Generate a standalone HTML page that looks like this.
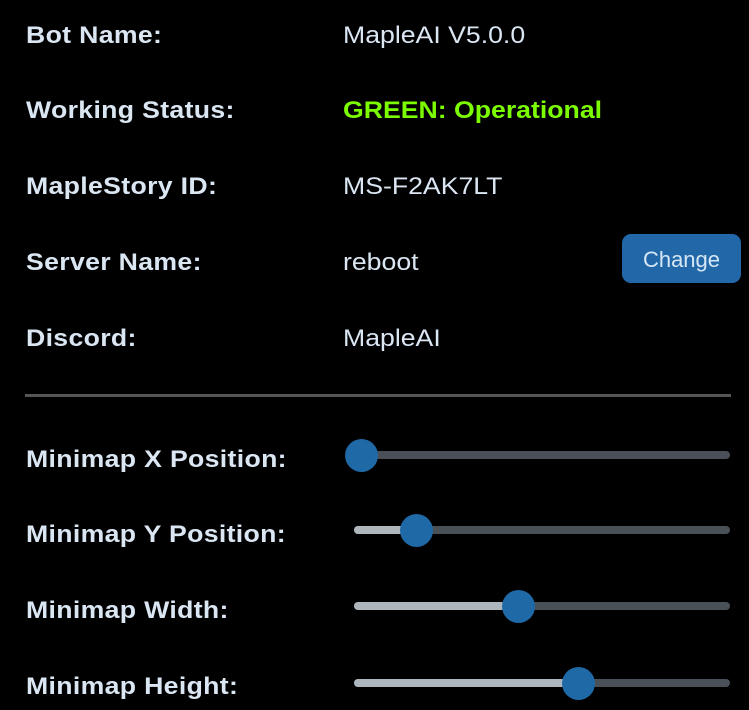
<!DOCTYPE html>
<html><head><style>
body{margin:0;background:#000;width:749px;height:710px;overflow:hidden;font-family:"Liberation Sans",sans-serif;position:relative}
.l{position:absolute;left:26px;font-weight:bold;font-size:24px;color:#dbe6f3;line-height:30px;letter-spacing:0.3px;transform:scaleX(1.11);transform-origin:left;white-space:nowrap;margin-top:2px}
.v{position:absolute;left:343px;font-size:24px;color:#dbe6f3;line-height:30px;transform:scaleX(1.11);transform-origin:left;white-space:nowrap;margin-top:2px}
.btn{position:absolute;left:622px;top:234px;width:119px;height:49px;background:#2268a8;border-radius:9px;color:#d5e6f6;font-size:22px;text-align:center;line-height:51px}
.hr{position:absolute;left:25px;top:394px;width:706px;height:3px;background:#555}
.tr{position:absolute;left:354px;width:376px;height:8px;border-radius:4px;background:#495057}
.f{position:absolute;left:0;top:0;height:8px;border-radius:4px;background:#adb5bd}
.th{position:absolute;width:33px;height:33px;border-radius:50%;background:#1f69a6;top:-12px}
</style></head><body>
<div class="l" style="top:19px">Bot Name:</div><div class="v" style="top:19px">MapleAI V5.0.0</div>
<div class="l" style="top:94px">Working Status:</div><div class="v" style="top:94px;color:#7cfc00;font-weight:bold">GREEN: Operational</div>
<div class="l" style="top:170px">MapleStory ID:</div><div class="v" style="top:170px">MS-F2AK7LT</div>
<div class="l" style="top:246px">Server Name:</div><div class="v" style="top:246px">reboot</div>
<div class="btn">Change</div>
<div class="l" style="top:322px">Discord:</div><div class="v" style="top:322px">MapleAI</div>
<div class="hr"></div>
<div class="l" style="top:443px">Minimap X Position:</div>
<div class="tr" style="top:451px"><div class="th" style="left:-9px"></div></div>
<div class="l" style="top:518px">Minimap Y Position:</div>
<div class="tr" style="top:526px"><div class="f" style="width:63px"></div><div class="th" style="left:46px"></div></div>
<div class="l" style="top:594px">Minimap Width:</div>
<div class="tr" style="top:602px"><div class="f" style="width:165px"></div><div class="th" style="left:148px"></div></div>
<div class="l" style="top:670px">Minimap Height:</div>
<div class="tr" style="top:679px"><div class="f" style="width:225px"></div><div class="th" style="left:208px"></div></div>
</body></html>
